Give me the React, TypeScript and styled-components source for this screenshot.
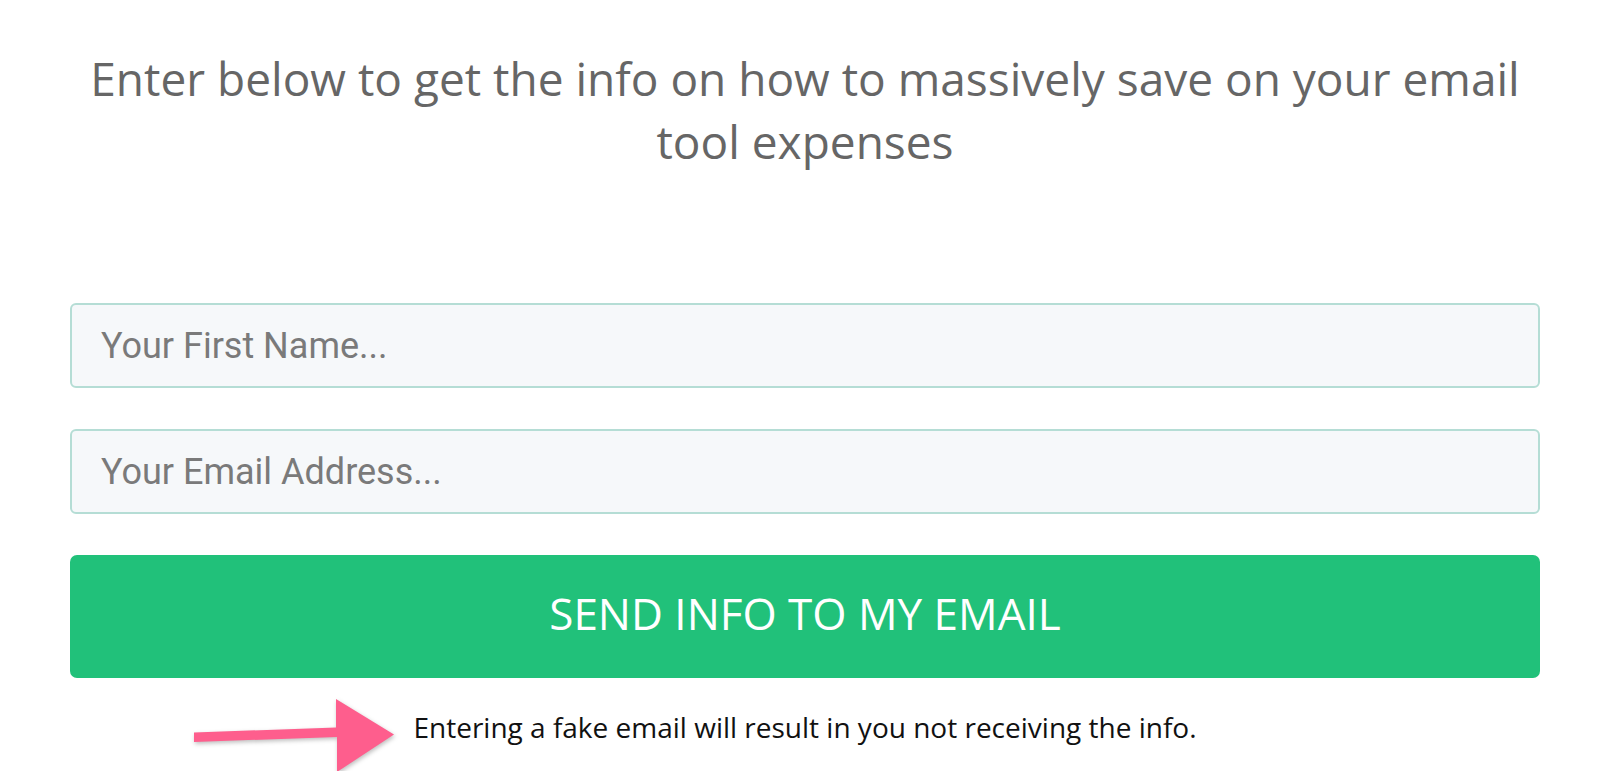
import React from "react";
import styled, { createGlobalStyle } from "styled-components";

const GlobalStyle = createGlobalStyle`
  html, body {
    margin: 0;
    padding: 0;
    background: #ffffff;
    overflow: hidden;
  }
  * { box-sizing: border-box; }
`;

const Page = styled.main`
  width: 1600px;
  height: 771px;
  padding: 47px 60px 0 70px;
  font-family: "Open Sans", "DejaVu Sans", sans-serif;
`;

const Heading = styled.h2`
  margin: 0 auto;
  max-width: 1440px;
  text-align: center;
  font-family: "Open Sans", sans-serif;
  font-weight: 400;
  font-size: 46px;
  line-height: 63px;
  color: #666666;
`;

const Form = styled.form`
  margin-top: 130px;
  display: flex;
  flex-direction: column;
  gap: 41px;
`;

const Field = styled.input`
  display: block;
  width: 100%;
  height: 85px;
  padding: 0 29px;
  border: 2px solid #b5ddd5;
  border-radius: 6px;
  background: #f6f8fa;
  font-family: Roboto, "Liberation Sans", sans-serif;
  font-size: 36px;
  color: #333;
  outline: none;

  &::placeholder {
    color: #7a7a7a;
    opacity: 1;
  }
`;

const SubmitButton = styled.button`
  display: flex;
  align-items: center;
  justify-content: center;
  width: 100%;
  height: 123px;
  padding: 0 0 8px;
  border: none;
  border-radius: 7px;
  background: #21c17a;
  color: #ffffff;
  font-family: "Open Sans", sans-serif;
  font-weight: 400;
  font-size: 44px;
  cursor: pointer;
`;

const NoteRow = styled.div`
  position: relative;
  margin-top: 30px;
  text-align: center;
`;

const Note = styled.p`
  margin: 0;
  font-family: "Open Sans", sans-serif;
  font-size: 28px;
  line-height: 38px;
  color: #111111;
`;

const ArrowMark = styled.svg`
  position: absolute;
  left: 118px;
  top: -12px;
  width: 214px;
  height: 80px;
  overflow: visible;
  filter: drop-shadow(1px 2px 2px rgba(0, 0, 0, 0.25));
`;

export default function App() {
  return (
    <>
      <GlobalStyle />
      <Page>
        <Heading>
          Enter below to get the info on how to massively save on your email
          tool expenses
        </Heading>
        <Form onSubmit={(e) => e.preventDefault()}>
          <Field type="text" placeholder="Your First Name..." />
          <Field type="email" placeholder="Your Email Address..." />
          <SubmitButton type="submit">SEND INFO TO MY EMAIL</SubmitButton>
        </Form>
        <NoteRow>
          <ArrowMark viewBox="0 0 214 80" aria-hidden="true">
            <path
              d="M6 36.5 L148 31.5 L148 3 L206 38.5 L149 76 L149 41 L6 46 Z"
              fill="#fe5e8d"
            />
          </ArrowMark>
          <Note>Entering a fake email will result in you not receiving the info.</Note>
        </NoteRow>
      </Page>
    </>
  );
}
